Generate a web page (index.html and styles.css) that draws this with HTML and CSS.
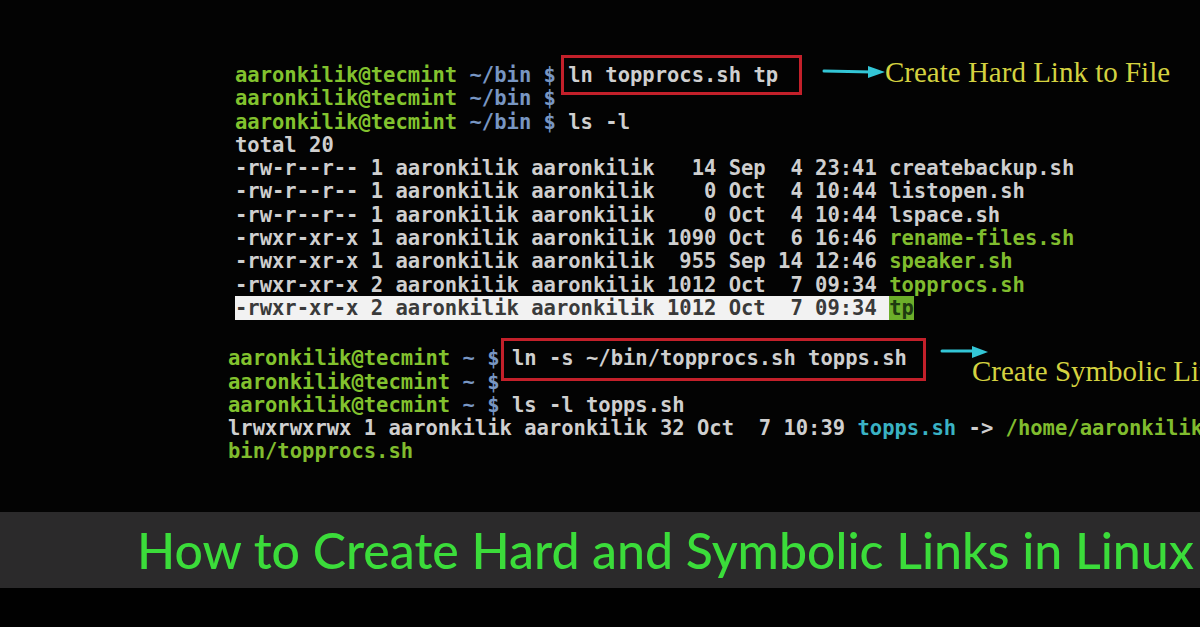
FILE: index.html
```html
<!DOCTYPE html>
<html>
<head>
<meta charset="utf-8">
<link rel="stylesheet" href="styles.css">
</head>
<body>
<div class="page">
  <div class="screen">
    <div class="term term-one">
      <div class="line"><span class="pr">aaronkilik@tecmint</span> <span class="path">~/bin $</span> <span class="boxed box-one">ln topprocs.sh tp</span></div>
      <div class="line"><span class="pr">aaronkilik@tecmint</span> <span class="path">~/bin $</span></div>
      <div class="line"><span class="pr">aaronkilik@tecmint</span> <span class="path">~/bin $</span> ls -l</div>
      <div class="line">total 20</div>
      <div class="line">-rw-r--r-- 1 aaronkilik aaronkilik   14 Sep  4 23:41 createbackup.sh</div>
      <div class="line">-rw-r--r-- 1 aaronkilik aaronkilik    0 Oct  4 10:44 listopen.sh</div>
      <div class="line">-rw-r--r-- 1 aaronkilik aaronkilik    0 Oct  4 10:44 lspace.sh</div>
      <div class="line">-rwxr-xr-x 1 aaronkilik aaronkilik 1090 Oct  6 16:46 <span class="ex">rename-files.sh</span></div>
      <div class="line">-rwxr-xr-x 1 aaronkilik aaronkilik  955 Sep 14 12:46 <span class="ex">speaker.sh</span></div>
      <div class="line">-rwxr-xr-x 2 aaronkilik aaronkilik 1012 Oct  7 09:34 <span class="ex">topprocs.sh</span></div>
      <div class="line"><span class="sel">-rwxr-xr-x 2 aaronkilik aaronkilik 1012 Oct  7 09:34 </span><span class="sel-ex">tp</span></div>
    </div>

    <div class="term term-two">
      <div class="line"><span class="pr">aaronkilik@tecmint</span> <span class="path">~ $</span> <span class="boxed box-two">ln -s ~/bin/topprocs.sh topps.sh</span></div>
      <div class="line"><span class="pr">aaronkilik@tecmint</span> <span class="path">~ $</span></div>
      <div class="line"><span class="pr">aaronkilik@tecmint</span> <span class="path">~ $</span> ls -l topps.sh</div>
      <div class="line">lrwxrwxrwx 1 aaronkilik aaronkilik 32 Oct  7 10:39 <span class="ln">topps.sh</span> -&gt; <span class="ex">/home/aaronkilik/</span></div>
      <div class="line"><span class="ex">bin/topprocs.sh</span></div>
    </div>

    <div class="note note-one">
      <svg class="arrow" width="64" height="16" viewBox="0 0 64 16"><path d="M2 7 L50 8" stroke="#33c6d6" stroke-width="3" stroke-linecap="round"/><path d="M46 2 L63 8 L46 14 Z" fill="#33c6d6"/></svg>
      <span class="note-text">Create Hard Link to File</span>
    </div>
    <div class="note note-two">
      <svg class="arrow" width="50" height="14" viewBox="0 0 50 14"><path d="M2 6 L36 6" stroke="#33c6d6" stroke-width="3" stroke-linecap="round"/><path d="M32 1 L48 7 L32 13 Z" fill="#33c6d6"/></svg>
      <span class="note-text">Create Symbolic Link</span>
    </div>
  </div>

  <div class="band">
    <h1 class="title">How to Create Hard and Symbolic Links in Linux</h1>
  </div>
  <div class="foot"></div>
</div>
</body>
</html>
```

FILE: styles.css
```css
* { box-sizing: border-box; }
html, body {
  margin: 0;
  padding: 0;
  background: #020202;
  width: 1200px;
  height: 627px;
  overflow: hidden;
}
.page {
  display: flex;
  flex-direction: column;
  width: 1200px;
  height: 627px;
}
.screen {
  position: relative;
  height: 512px;
  flex: none;
  background: #030303;
  padding-top: 64px;
  overflow: hidden;
}
.term {
  font-family: "DejaVu Sans Mono", "Liberation Mono", monospace;
  font-size: 20.5px;
  line-height: 23.3px;
  color: #cfcfcf;
  font-weight: bold;
}
.term-one { padding-left: 235px; }
.term-two { padding-left: 228px; margin-top: 27px; }
.line { height: 23.3px; white-space: pre; }
.pr { color: #82c22e; }
.path { color: #7896c2; }
.ex { color: #80bc2e; }
.ln { color: #3ab2c4; }
.sel {
  background: #f2f2f2;
  color: #3a3a3a;
}
.sel-ex {
  background: #6cae2a;
  color: #1e3a10;
}
.boxed {
  position: relative;
}
.boxed::before {
  content: "";
  position: absolute;
  border: 3px solid #c3202a;
}
.box-one::before { left: -7px; right: -24px; top: -8px; bottom: -8px; }
.box-two::before { left: -11px; right: -19px; top: -8px; bottom: -11px; }
.note {
  position: absolute;
  display: flex;
  align-items: flex-start;
  white-space: nowrap;
}
.note-one { left: 822px; top: 56px; }
.note-one .arrow { margin-top: 8px; }
.note-two { left: 940px; top: 345px; }
.note-two .arrow { margin-top: 0; }
.note-text {
  font-family: "Liberation Serif", "Times New Roman", serif;
  font-size: 29px;
  color: #d4d240;
}
.note-two .note-text { margin-left: -18px; margin-top: 10px; }
.note-one .note-text { margin-left: -1px; }
.band {
  height: 76px;
  flex: none;
  background: #2b2a2b;
  display: flex;
  align-items: center;
  padding-left: 137px;
}
.title {
  margin: 0;
  font-family: "Lato", "Noto Sans", sans-serif;
  font-weight: 500;
  font-size: 50px;
  color: #3bdc3a;
  white-space: nowrap;
  letter-spacing: 0;
}
.foot {
  flex: 1;
  background: #010101;
}
```
